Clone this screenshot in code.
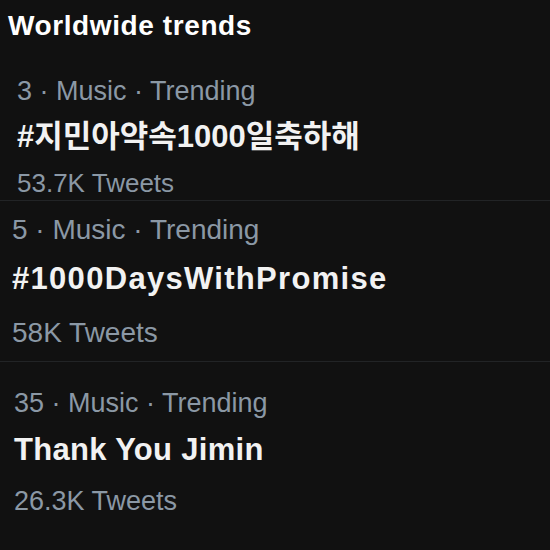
const font = "font-['Liberation_Sans','Noto_Sans_CJK_KR',sans-serif]"

type Trend = {
  meta: string
  title: string
  count: string
  pad: string
  metaCls: string
  titleCls: string
  countCls: string
}

const trends: Trend[] = [
  {
    meta: '3 · Music · Trending',
    title: '#지민아약속1000일축하해',
    count: '53.7K Tweets',
    pad: 'pl-[17px]',
    metaCls: 'mt-[29px] text-[27px] leading-[32px]',
    titleCls: 'mt-[12px] text-[31px] leading-[36px]',
    countCls: 'mt-[12px] text-[26px] leading-[32px]',
  },
  {
    meta: '5 · Music · Trending',
    title: '#1000DaysWithPromise',
    count: '58K Tweets',
    pad: 'pl-[12px]',
    metaCls: 'mt-[12px] text-[28px] leading-[34px]',
    titleCls: 'mt-[13px] text-[31px] leading-[38px] tracking-[1.3px]',
    countCls: 'mt-[19px] text-[28px] leading-[32px]',
  },
  {
    meta: '35 · Music · Trending',
    title: 'Thank You Jimin',
    count: '26.3K Tweets',
    pad: 'pl-[14px]',
    metaCls: 'mt-[25px] text-[27px] leading-[32px]',
    titleCls: 'mt-[13px] text-[31px] leading-[36px] tracking-[0.3px]',
    countCls: 'mt-[17px] text-[27px] leading-[32px]',
  },
]

function TrendItem({ t }: { t: Trend }) {
  return (
    <div className={t.pad}>
      <div className={`${t.metaCls} text-[#8b98a5]`}>{t.meta}</div>
      <div className={`${t.titleCls} font-bold text-[#f2f2f2]`}>{t.title}</div>
      <div className={`${t.countCls} text-[#8b98a5]`}>{t.count}</div>
    </div>
  )
}

export default function App() {
  return (
    <div className={`w-[550px] h-[550px] overflow-hidden bg-[#111111] ${font}`}>
      <h2 className="pt-[6px] pl-[8px] text-[28px] leading-[40px] font-bold tracking-[0.6px] text-white">
        Worldwide trends
      </h2>
      <TrendItem t={trends[0]} />
      <div className="mt-[1px] h-px bg-[#222426]" />
      <TrendItem t={trends[1]} />
      <div className="mt-[12px] h-px bg-[#222426]" />
      <TrendItem t={trends[2]} />
    </div>
  )
}
